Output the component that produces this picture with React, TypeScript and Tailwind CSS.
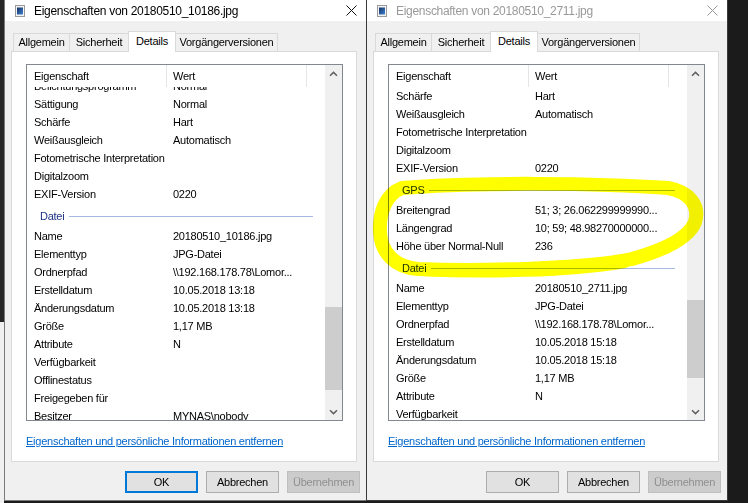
import React from "react";

type Item =
  | { kind: "row"; name: string; value?: string }
  | { kind: "group"; label: string };

const leftItems: Item[] = [
  { kind: "row", name: "Belichtungsprogramm", value: "Normal" },
  { kind: "row", name: "Sättigung", value: "Normal" },
  { kind: "row", name: "Schärfe", value: "Hart" },
  { kind: "row", name: "Weißausgleich", value: "Automatisch" },
  { kind: "row", name: "Fotometrische Interpretation" },
  { kind: "row", name: "Digitalzoom" },
  { kind: "row", name: "EXIF-Version", value: "0220" },
  { kind: "group", label: "Datei" },
  { kind: "row", name: "Name", value: "20180510_10186.jpg" },
  { kind: "row", name: "Elementtyp", value: "JPG-Datei" },
  { kind: "row", name: "Ordnerpfad", value: "\\\\192.168.178.78\\Lomor..." },
  { kind: "row", name: "Erstelldatum", value: "10.05.2018 13:18" },
  { kind: "row", name: "Änderungsdatum", value: "10.05.2018 13:18" },
  { kind: "row", name: "Größe", value: "1,17 MB" },
  { kind: "row", name: "Attribute", value: "N" },
  { kind: "row", name: "Verfügbarkeit" },
  { kind: "row", name: "Offlinestatus" },
  { kind: "row", name: "Freigegeben für" },
  { kind: "row", name: "Besitzer", value: "MYNAS\\nobody" },
];

const rightItems: Item[] = [
  { kind: "row", name: "Schärfe", value: "Hart" },
  { kind: "row", name: "Weißausgleich", value: "Automatisch" },
  { kind: "row", name: "Fotometrische Interpretation" },
  { kind: "row", name: "Digitalzoom" },
  { kind: "row", name: "EXIF-Version", value: "0220" },
  { kind: "group", label: "GPS" },
  { kind: "row", name: "Breitengrad", value: "51; 3; 26.062299999990..." },
  { kind: "row", name: "Längengrad", value: "10; 59; 48.98270000000..." },
  { kind: "row", name: "Höhe über Normal-Null", value: "236" },
  { kind: "group", label: "Datei" },
  { kind: "row", name: "Name", value: "20180510_2711.jpg" },
  { kind: "row", name: "Elementtyp", value: "JPG-Datei" },
  { kind: "row", name: "Ordnerpfad", value: "\\\\192.168.178.78\\Lomor..." },
  { kind: "row", name: "Erstelldatum", value: "10.05.2018 15:18" },
  { kind: "row", name: "Änderungsdatum", value: "10.05.2018 15:18" },
  { kind: "row", name: "Größe", value: "1,17 MB" },
  { kind: "row", name: "Attribute", value: "N" },
  { kind: "row", name: "Verfügbarkeit" },
];

function FileIcon() {
  return (
    <svg width="10" height="12" viewBox="0 0 10 12">
      <rect x="0.5" y="0.5" width="9" height="11" fill="#f4f4f4" stroke="#9a9a9a" />
      <defs>
        <linearGradient id="pic" x1="0" y1="0" x2="1" y2="1">
          <stop offset="0" stopColor="#14305e" />
          <stop offset="1" stopColor="#3d82d6" />
        </linearGradient>
      </defs>
      <rect x="2" y="2.5" width="6" height="7" fill="url(#pic)" />
    </svg>
  );
}

function CloseX({ color }: { color: string }) {
  return (
    <svg width="11" height="11" viewBox="0 0 11 11">
      <path d="M0.5 0.5 L10.5 10.5 M10.5 0.5 L0.5 10.5" stroke={color} strokeWidth="1" />
    </svg>
  );
}

function Chevron({ down }: { down?: boolean }) {
  return (
    <svg width="9" height="6" viewBox="0 0 9 6">
      <path
        d={down ? "M1 1.2 L4.5 4.6 L8 1.2" : "M1 4.8 L4.5 1.4 L8 4.8"}
        fill="none"
        stroke="#606060"
        strokeWidth="1.5"
      />
    </svg>
  );
}

function PropertyList({
  items,
  offset,
  thumbTop,
  thumbHeight,
}: {
  items: Item[];
  offset: string;
  thumbTop: string;
  thumbHeight: string;
}) {
  return (
    <div className="flex h-[357px] w-[317px] border border-[#828790] bg-white">
      <div className="flex w-[299px] flex-col">
        {/* Header */}
        <div className="flex h-[22px] shrink-0">
          <div className="flex w-[140px] items-center border-r border-[#e5e5e5] pl-[7px]">Eigenschaft</div>
          <div className="flex w-[140px] items-center border-r border-[#e5e5e5] pl-[6px]">Wert</div>
        </div>
        {/* Rows */}
        <div className="flex-1 overflow-hidden">
          <div className={offset}>
            {items.map((it, i) =>
              it.kind === "group" ? (
                <div key={i} className="flex h-[24px] items-center pl-[13px] pr-[12px] pt-[2px]">
                  <span className="text-[#1e3287]">{it.label}</span>
                  <div className="ml-[5px] h-px flex-1 bg-[#a9b8e0]" />
                </div>
              ) : (
                <div key={i} className="flex h-[18px] items-center whitespace-nowrap">
                  <div className="w-[140px] shrink-0 overflow-hidden pl-[7px]">{it.name}</div>
                  <div className="pl-[6px]">{it.value}</div>
                </div>
              )
            )}
          </div>
        </div>
      </div>
      {/* Scrollbar */}
      <div className="flex w-[17px] flex-col bg-[#f0f0f0]">
        <div className="flex h-[17px] items-center justify-center">
          <Chevron />
        </div>
        <div className="flex-1">
          <div className={`${thumbTop} ${thumbHeight} bg-[#cdcdcd]`} />
        </div>
        <div className="flex h-[17px] items-center justify-center">
          <Chevron down />
        </div>
      </div>
    </div>
  );
}

function DialogWindow({
  title,
  active,
  items,
  offset,
  thumbTop,
  thumbHeight,
  border,
}: {
  title: string;
  active: boolean;
  items: Item[];
  offset: string;
  thumbTop: string;
  thumbHeight: string;
  border: string;
}) {
  return (
    <div className={`flex h-[501px] w-[362px] shrink-0 flex-col bg-[#f0f0f0] ${border}`}>
      {/* Title bar */}
      <div className="flex h-[21px] shrink-0 items-center bg-white">
        <div className="ml-[10px]">
          <FileIcon />
        </div>
        <div
          className={`ml-[9px] flex-1 text-[12px] tracking-[-0.3px] ${active ? "text-black" : "text-[#999999]"}`}
        >
          {title}
        </div>
        <div className="mr-[9px]">
          <CloseX color={active ? "#111111" : "#999999"} />
        </div>
      </div>

      {/* Tabs */}
      <div className="mt-[10px] flex h-[20px] items-end pl-[8px]">
        <div className="flex h-[18px] w-[57px] items-center justify-center border border-b-0 border-[#d9d9d9]">Allgemein</div>
        <div className="-ml-px flex h-[18px] w-[60px] items-center justify-center border border-b-0 border-[#d9d9d9]">Sicherheit</div>
        <div className="relative z-10 -mb-px -ml-px flex h-[21px] w-[48px] items-center justify-center border border-b-0 border-[#d9d9d9] bg-white pb-[2px]">
          Details
        </div>
        <div className="-ml-px flex h-[18px] w-[103px] items-center justify-center border border-b-0 border-[#d9d9d9]">Vorgängerversionen</div>
      </div>

      {/* Panel */}
      <div className="ml-[6px] h-[411px] w-[346px] border border-[#d9d9d9] bg-white pl-[14px] pt-[12px]">
        <PropertyList items={items} offset={offset} thumbTop={thumbTop} thumbHeight={thumbHeight} />
        <div className="mt-[12px]">
          <span className="text-[#0066cc] underline">Eigenschaften und persönliche Informationen entfernen</span>
        </div>
      </div>

      {/* Buttons */}
      <div className="mt-[9px] flex justify-end gap-[8px] pr-[6px]">
        <div
          className={`flex h-[22px] w-[73px] items-center justify-center bg-[#e1e1e1] ${
            active ? "border-2 border-[#0078d7]" : "border border-[#adadad]"
          }`}
        >
          OK
        </div>
        <div className="flex h-[22px] w-[73px] items-center justify-center border border-[#adadad] bg-[#e1e1e1]">Abbrechen</div>
        <div className="flex h-[22px] w-[73px] items-center justify-center border border-[#bfbfbf] bg-[#cccccc] text-[#8f8f8f]">
          Übernehmen
        </div>
      </div>
    </div>
  );
}

export default function App() {
  return (
    <div className="relative flex h-[503px] w-[748px] overflow-hidden bg-[#1b1b1b] font-['Liberation_Sans',Arial,sans-serif] text-[11px] tracking-[-0.25px] text-black">
      {/* Desktop behind */}
      <div className="flex w-[4px] shrink-0 flex-col">
        <div className="h-[322px] bg-[#262626]" />
        <div className="flex-1 bg-[#f0f0f0]" />
      </div>

      <DialogWindow
        title="Eigenschaften von 20180510_10186.jpg"
        active
        items={leftItems}
        offset="-mt-[10px]"
        thumbTop="mt-[225px]"
        thumbHeight="h-[83px]"
        border="border-l border-b border-[#7a7a7a]"
      />
      <DialogWindow
        title="Eigenschaften von 20180510_2711.jpg"
        active={false}
        items={rightItems}
        offset="mt-0"
        thumbTop="mt-[218px]"
        thumbHeight="h-[78px]"
        border="border-l border-r border-b border-[#3a3a3a]"
      />

      {/* Yellow highlighter mark */}
      <svg
        className="pointer-events-none absolute left-0 top-0 mix-blend-multiply"
        width="748"
        height="503"
        viewBox="0 0 748 503"
      >
        <path
          d="M402 188 C470 182 600 183 668 188 C690 192 700 206 695 222 C689 238 664 250 632 259 C580 270 470 271 418 269 C394 267 381 252 380 232 C379 212 386 194 402 188 Z"
          fill="none"
          stroke="#ffff00"
          strokeWidth="14"
          strokeLinejoin="round"
        />
        <path
          d="M420 272 C480 275 570 274 625 264"
          fill="none"
          stroke="#ffff00"
          strokeWidth="8"
          strokeLinecap="round"
        />
      </svg>
    </div>
  );
}
